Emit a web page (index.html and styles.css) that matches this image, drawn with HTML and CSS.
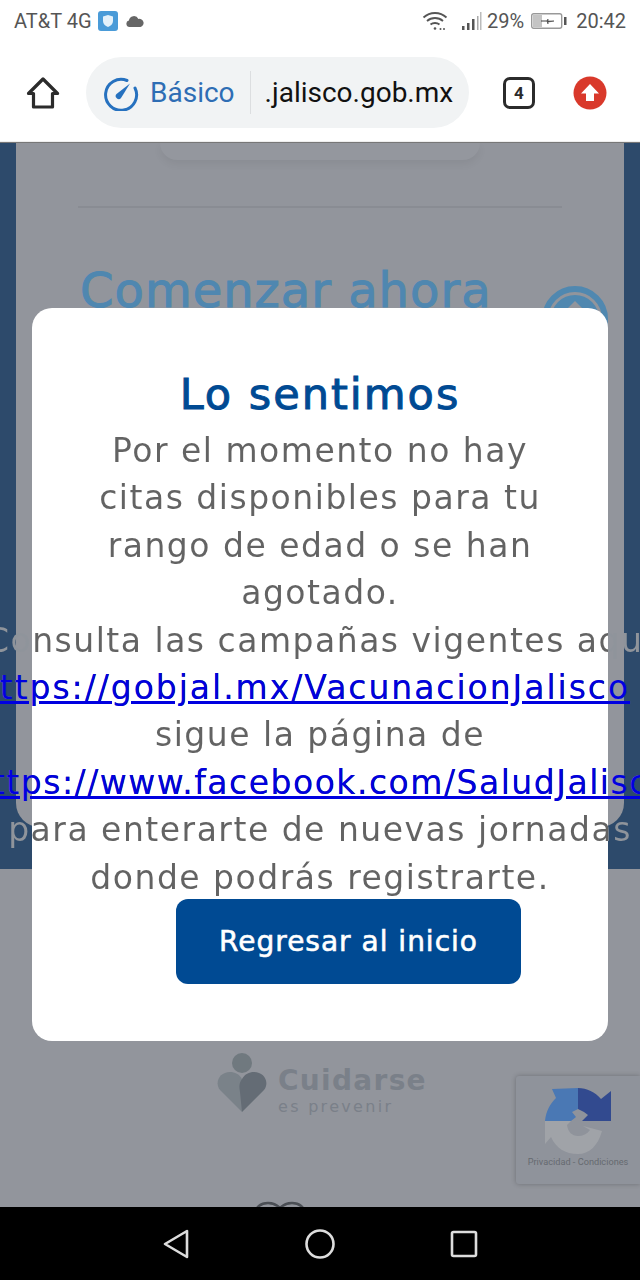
FILE: index.html
```html
<!DOCTYPE html>
<html lang="es">

<head>
  <meta charset="UTF-8">
  <meta name="viewport" content="width=device-width, initial-scale=1.0">
  <title>Lo sentimos</title>
  <link rel="stylesheet" href="styles.css">
</head>

<body>
  <div class="phone">
    <!-- status bar -->
    <div class="status">
      <div class="status-left">
        <span>AT&amp;T 4G</span>
        <svg class="ic-shield" width="20" height="20" viewBox="0 0 20 20">
          <rect width="20" height="20" rx="3" fill="#4a9bd8" />
          <path d="M5 5.500 10 4l5 1.500v4.500c0 3-2.200 4.800-5 6-2.800-1.200-5-3-5-6z" fill="#e4f1fa" />
        </svg>
        <svg class="ic-cloud" width="18" height="12" viewBox="0 0 18 12">
          <path d="M3.500 12a3.300 3.300 0 0 1-.6-6.500A5 5 0 0 1 12.400 4 4 4 0 0 1 14.500 12z" fill="#666" />
        </svg>
      </div>
      <div class="status-right">
        <svg class="ic-wifi" width="26" height="20" viewBox="0 0 26 20" fill="none" stroke="#555" stroke-width="1.800">
          <path d="M1.500 6.500c6.500-6 16.500-6 23 0" />
          <path d="M5 10c4.500-4 11.500-4 16 0" />
          <path d="M8.500 13.500c2.500-2 6.500-2 9 0" />
          <circle cx="13" cy="17.500" r="1.300" fill="#555" stroke="none" />
          <circle cx="18.500" cy="18" r="1" fill="#555" stroke="none" />
          <circle cx="22" cy="18" r="1" fill="#555" stroke="none" />
        </svg>
        <svg class="ic-signal" width="20" height="18" viewBox="0 0 20 18">
          <rect x="0" y="14" width="2.500" height="4" fill="#555" />
          <rect x="5" y="11" width="2.500" height="7" fill="#555" />
          <rect x="10" y="7" width="2.500" height="11" fill="#555" />
          <rect x="15" y="4" width="1.500" height="14" fill="#aaa" />
          <rect x="18" y="0" width="1.500" height="18" fill="#bbb" />
        </svg>
        <span>29%</span>
        <svg class="ic-battery" width="36" height="16" viewBox="0 0 36 16">
          <rect x=".7" y=".7" width="30" height="14.600" rx="2" fill="#fff" stroke="#999" stroke-width="1.400" />
          <rect x="2" y="2" width="9" height="12" fill="#c4c4c4" />
          <path d="M10 8h6l1-2v2h6l-6 1v2l-1-3z" fill="#444" stroke="#444" stroke-width=".6" />
          <rect x="33" y="4" width="2.500" height="8" fill="#555" />
        </svg>
        <span>20:42</span>
      </div>
    </div>

    <!-- browser toolbar -->
    <div class="toolbar">
      <svg class="ic-home" width="34" height="32" viewBox="0 0 34 32" fill="none" stroke="#2b2b2b" stroke-width="3.200" stroke-linejoin="round" stroke-linecap="round">
        <path d="M2.500 16.500 17 2l14.500 14.500h-5V30h-19V16.500z" />
      </svg>
      <div class="omnibox">
        <svg width="36" height="36" viewBox="0 0 36 36" fill="none">
          <path d="M24 5.500A15.500 15.500 0 1 0 32 13" stroke="#2671bf" stroke-width="3" stroke-linecap="round" />
          <path d="M13.500 19 27 8.500 18 23a3 3 0 0 1-4.500-4z" fill="#2671bf" />
        </svg>
        <span class="mode">Básico</span>
        <span class="url">.jalisco.gob.mx</span>
      </div>
      <div class="tabs">4</div>
      <svg class="ic-update" width="34" height="34" viewBox="0 0 34 34">
        <circle cx="17" cy="17" r="16.500" fill="#d9392b" />
        <path d="M17 8 26 17.500h-5V25h-8v-7.500H8z" fill="#fff" />
      </svg>
    </div>

    <!-- page behind the dialog -->
    <div class="page">
      <div class="band">
        <div class="panel">
          <div class="pill"></div>
          <hr class="divider">
          <div class="start-row">
            <h2 class="start">Comenzar ahora</h2>
            <svg class="start-icon" width="66" height="66" viewBox="0 0 66 66" fill="none">
              <circle cx="33" cy="33" r="30" stroke="#5088b0" stroke-width="6" />
              <circle cx="33" cy="33" r="24" fill="#5088b0" />
              <path d="M33 15 24 24h18z" fill="#92959c" />
            </svg>
          </div>
        </div>
      </div>

      <div class="brand">
        <svg width="50" height="60" viewBox="0 0 50 60">
          <circle cx="25" cy="10" r="10" fill="#70797f" />
          <path d="M25 59 3 37C-3 29 3 19 13 19c5 0 9 2 12 7z" fill="#7a8289" />
          <path d="M25 59 47 37c6-8 0-18-10-18-5 0-9 2-12 7-3 4-3 8-2 13z" fill="#646c75" />
        </svg>
        <div class="brand-text">
          <div class="brand-name">Cuidarse</div>
          <div class="brand-sub">es prevenir</div>
        </div>
      </div>

      <svg class="heart" width="54" height="14" viewBox="0 0 54 14" fill="none" stroke="#4a4e54" stroke-width="2.500">
        <path d="M2 14C2 6 8 2 15 2c6 0 10 3 12 5 2-2 6-5 12-5 7 0 13 4 13 12" />
      </svg>

      <div class="recaptcha">
        <svg width="66" height="66" viewBox="0 0 66 66">
          <path d="M0 33C1 23 5 16 11 10L7 1 33 0V21L27 24 31 29 26 33z" fill="#4a78b4" />
          <path d="M33 0C42 0 50 4 56 11L66 3V33H37L43 27 39 24 33 21z" fill="#324a8f" />
          <path d="M0 33H26L22 37C23 44 27 48 33 48 38 48 42 46 45 42L38 38 57 43C53 58 44 66 33 66 20 66 11 60 6 49L0 56z" fill="#a0a3a8" />
        </svg>
        <div class="recaptcha-links">Privacidad - Condiciones</div>
      </div>

      <!-- dialog -->
      <div class="modal">
        <h1 class="modal-title">Lo sentimos</h1>
        <div class="modal-text">
          <span class="line">Por el momento no hay</span>
          <span class="line">citas disponibles para tu</span>
          <span class="line">rango de edad o se han</span>
          <span class="line">agotado.</span>
          <span class="line">Consulta las campañas vigentes aquí</span>
          <span class="line"><a class="link-wide" href="#">https://gobjal.mx/VacunacionJalisco</a> y</span>
          <span class="line">sigue la página de</span>
          <span class="line"><a href="#">https://www.facebook.com/SaludJalisco</a></span>
          <span class="line">para enterarte de nuevas jornadas</span>
          <span class="line">donde podrás registrarte.</span>
        </div>
        <button class="back-btn">Regresar al inicio</button>
      </div>
    </div>

    <!-- android nav bar -->
    <div class="nav">
      <svg width="28" height="32" viewBox="0 0 28 32" fill="none" stroke="#ddd" stroke-width="2.600" stroke-linejoin="round">
        <path d="M25 3v26L3 16z" />
      </svg>
      <svg width="30" height="30" viewBox="0 0 30 30" fill="none" stroke="#ddd" stroke-width="2.600">
        <circle cx="15" cy="15" r="13.500" />
      </svg>
      <svg width="28" height="28" viewBox="0 0 28 28" fill="none" stroke="#ddd" stroke-width="2.600" stroke-linejoin="round">
        <rect x="2" y="2" width="24" height="24" rx="1.500" />
      </svg>
    </div>
  </div>
</body>

</html>
```

FILE: styles.css
```css
* {
  margin: 0;
  padding: 0;
  box-sizing: border-box;
}

body {
  background-color: #000;
  font-family: "DejaVu Sans", sans-serif;
}

.phone {
  display: flex;
  flex-direction: column;
  width: 640px;
  height: 1280px;
  overflow: hidden;
}

/* status bar */
.status {
  display: flex;
  justify-content: space-between;
  align-items: center;
  height: 44px;
  padding: 0 14px 2px;
  background-color: #fff;
  color: #555;
  font-family: "Roboto", sans-serif;
  font-size: 20px;
}

.status-left,
.status-right {
  display: flex;
  align-items: center;
}

.ic-shield {
  margin-left: 6px;
}

.ic-cloud {
  margin-left: 8px;
}

.ic-signal {
  margin: 0 5px 0 14px;
}

.ic-battery {
  margin: 0 9px 0 7px;
}

/* browser toolbar */
.toolbar {
  display: flex;
  align-items: center;
  height: 98px;
  padding: 0 33px 0 26px;
  background-color: #fff;
  border-bottom: 1px solid #eee;
}

.ic-home {
  margin-right: 26px;
}

.omnibox {
  display: flex;
  align-items: center;
  width: 383px;
  height: 71px;
  padding-left: 17px;
  background-color: #f1f3f4;
  border-radius: 36px;
  font-family: "Roboto", sans-serif;
  font-size: 28px;
}

.mode {
  margin-left: 11px;
  padding-right: 15px;
  color: #2e6db4;
  border-right: 1px solid #dcdee0;
  line-height: 43px;
}

.url {
  margin-left: 14px;
  color: #111;
}

.tabs {
  display: flex;
  justify-content: center;
  align-items: center;
  width: 32px;
  height: 32px;
  margin: 0 38px 0 34px;
  border: 3px solid #2b2b2b;
  border-radius: 7px;
  color: #2b2b2b;
  font-family: "Roboto", sans-serif;
  font-size: 17px;
  font-weight: 700;
}

/* page behind the dialog */
.page {
  position: relative;
  flex: 1;
  overflow: hidden;
  background-color: #92959c;
  border-top: 1px solid #777;
}

.band {
  height: 726px;
  padding: 0 16px;
  background-color: #2d4a6b;
}

.panel {
  height: 684px;
  background-color: #92959c;
  border-radius: 0 0 24px 24px;
}

.pill {
  width: 320px;
  height: 17px;
  margin-left: 144px;
  background-color: #94979e;
  border-radius: 0 0 24px 24px;
  box-shadow: 0 4px 8px rgba(0, 0, 0, .06);
}

.divider {
  height: 2px;
  margin: 46px 62px 0;
  border: 0;
  background-color: #898c93;
}

.start-row {
  display: flex;
  justify-content: space-between;
  padding: 52px 16px 0 64px;
}

.start {
  color: #4f87b0;
  font-size: 48px;
  font-weight: 400;
  letter-spacing: 1px;
  -webkit-text-stroke: 1px #4f87b0;
  line-height: 60px;
}

.start-icon {
  margin-top: 26px;
}

.brand {
  display: flex;
  align-items: flex-start;
  gap: 11px;
  margin: 184px 0 0 217px;
}

.brand-text {
  padding-top: 11px;
}

.brand-name {
  color: #7a8089;
  font-size: 28px;
  font-weight: 700;
  letter-spacing: 1.300px;
  line-height: 33px;
}

.brand-sub {
  color: #7a8089;
  font-size: 16px;
  letter-spacing: 2.300px;
  line-height: 19px;
}

.heart {
  display: block;
  margin: 85px 0 0 253px;
}

.recaptcha {
  position: absolute;
  top: 933px;
  right: 0;
  width: 124px;
  height: 108px;
  padding-top: 12px;
  background-color: #8f939b;
  border-radius: 3px 0 0 3px;
  box-shadow: 0 0 5px rgba(0, 0, 0, .25);
  text-align: center;
}

.recaptcha svg {
  display: block;
  margin: 0 0 0 29px;
}

.recaptcha-links {
  margin-top: 2px;
  color: #666a70;
  font-family: "Roboto", sans-serif;
  font-size: 9.200px;
}

/* dialog */
.modal {
  position: absolute;
  top: 165px;
  left: 32px;
  width: 576px;
  height: 733px;
  padding-top: 61px;
  background-color: #fff;
  border-radius: 20px;
}

.modal-title {
  margin-bottom: 8px;
  color: #004a93;
  font-size: 43px;
  font-weight: 400;
  letter-spacing: 2px;
  -webkit-text-stroke: 1px #004a93;
  line-height: 50px;
  text-align: center;
}

/* the text is wider than the dialog, it runs out on both sides */
.modal-text {
  display: flex;
  flex-direction: column;
  align-items: center;
  width: 640px;
  margin-left: -32px;
  background-image: linear-gradient(to right, #8f949b 32px, #636363 32px, #636363 608px, #8f949b 608px);
  -webkit-background-clip: text;
  background-clip: text;
  color: transparent;
  font-size: 33px;
  letter-spacing: 1.500px;
}

.line {
  flex: none;
  height: 47.400px;
  line-height: 47.400px;
  white-space: nowrap;
}

.modal-text a {
  color: #0000e0;
}

.modal-text .link-wide {
  letter-spacing: 1.950px;
}

.back-btn {
  display: block;
  width: 345px;
  height: 85px;
  margin: -2px 0 0 144px;
  border: 0;
  border-radius: 12px;
  background-color: #004a93;
  color: #fff;
  font-family: inherit;
  font-size: 28px;
  letter-spacing: 1px;
  -webkit-text-stroke: .6px #fff;
}

/* android nav bar */
.nav {
  display: flex;
  justify-content: center;
  align-items: center;
  gap: 115px;
  height: 73px;
  background-color: #000;
}
```
